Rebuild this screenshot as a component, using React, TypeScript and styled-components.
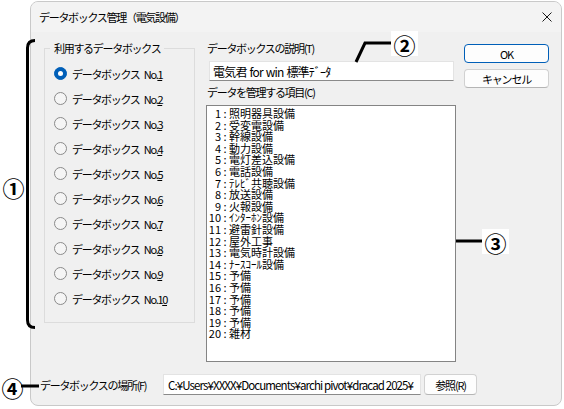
import styled, { createGlobalStyle } from 'styled-components';

const GlobalStyle = createGlobalStyle`
  html, body {
    margin: 0;
    padding: 0;
    background: #ffffff;
  }
  body {
    font-family: "Noto Sans CJK JP", "Noto Sans", sans-serif;
  }
`;

const boxes = Array.from({ length: 10 }, (_, i) => i + 1);

const items = [
  '照明器具設備', '受変電設備', '幹線設備', '動力設備', '電灯差込設備',
  '電話設備', 'ﾃﾚﾋﾞ共聴設備', '放送設備', '火報設備', 'ｲﾝﾀｰﾎﾝ設備',
  '避雷針設備', '屋外工事', '電気時計設備', 'ﾅｰｽｺｰﾙ設備', '予備',
  '予備', '予備', '予備', '予備', '雑材',
];

const Page = styled.div`
  position: relative;
  width: 564px;
  height: 409px;
  box-sizing: border-box;
  padding: 1px 2px 3px 30px;
  overflow: hidden;
`;

const Window = styled.div`
  width: 532px;
  height: 405px;
  box-sizing: border-box;
  border: 1px solid #c9c9c9;
  border-radius: 8px;
  background: #f0f0f0;
  overflow: hidden;
  display: flex;
  flex-direction: column;
  color: #000;
  font-size: 11px;
  letter-spacing: -1.3px;
  word-spacing: 3px;
`;

const TitleBar = styled.div`
  height: 30px;
  flex: none;
  display: flex;
  align-items: center;
  justify-content: space-between;
  padding: 0 9px 0 8px;
  background: #f3f3f3;
  font-size: 11px;
  letter-spacing: -1.3px;
`;

const CloseIcon = styled.svg`
  width: 10px;
  height: 10px;
  stroke: #1a1a1a;
  stroke-width: 1;
`;

const Body = styled.div`
  flex: 1;
  display: flex;
  flex-direction: column;
  padding: 9px 12px 0 9px;
`;

const MainRow = styled.div`
  display: flex;
  align-items: flex-start;
  padding-left: 4px;
`;

const GroupBox = styled.fieldset`
  width: 151px;
  height: 282px;
  box-sizing: border-box;
  margin: 0;
  padding: 6px 9px 0 9px;
  border: 1px solid #dcdcdc;
`;

const Legend = styled.legend`
  padding: 0 4px;
  margin-left: -4px;
  line-height: 14px;
`;

const RadioRow = styled.label`
  height: 25px;
  display: flex;
  align-items: center;
  gap: 5px;
  white-space: nowrap;
`;

const Radio = styled.span<{ $on?: boolean }>`
  width: 13px;
  height: 13px;
  flex: none;
  box-sizing: border-box;
  border-radius: 50%;
  border: 1px solid ${(p) => (p.$on ? '#005fb8' : '#8a8a8a')};
  background: ${(p) => (p.$on ? '#005fb8' : '#f5f5f5')};
  display: flex;
  align-items: center;
  justify-content: center;
  &::after {
    content: '';
    display: ${(p) => (p.$on ? 'block' : 'none')};
    width: 5px;
    height: 5px;
    border-radius: 50%;
    background: #fff;
  }
`;

const Key = styled.span`
  text-decoration: underline;
  text-underline-offset: 1px;
`;

const MidColumn = styled.div`
  width: 250px;
  margin-left: 11px;
  display: flex;
  flex-direction: column;
`;

const Label = styled.div<{ $gap?: number }>`
  line-height: 14px;
  padding-left: 1px;
  margin-top: ${(p) => p.$gap ?? 0}px;
  white-space: nowrap;
`;

const TextBox = styled.div`
  height: 20px;
  box-sizing: border-box;
  background: #fff;
  border: 1px solid #e3e3e3;
  border-bottom-color: #8a8a8a;
  display: flex;
  align-items: center;
  white-space: pre;
  overflow: hidden;
`;

const DescBox = styled(TextBox)`
  width: 245px;
  margin: 6px 0 0 3px;
  padding-left: 3px;
  font-size: 12px;
  letter-spacing: -0.8px;
  word-spacing: 1px;
`;

const ListBox = styled.div`
  width: 250px;
  height: 257px;
  margin-top: 6px;
  box-sizing: border-box;
  border: 1px solid #848484;
  background: #fff;
  overflow: hidden;
  padding: 2px 0 0 0;
  font-size: 11px;
  letter-spacing: 0;
  word-spacing: 0;
`;

const Item = styled.div`
  height: 11.6px;
  line-height: 11.6px;
  display: flex;
  white-space: nowrap;
`;

const Num = styled.span`
  width: 14px;
  text-align: right;
`;

const Colon = styled.span`
  width: 8px;
  text-align: center;
`;

const ButtonColumn = styled.div`
  margin-left: 8px;
  padding-top: 3px;
  display: flex;
  flex-direction: column;
  gap: 6px;
`;

const Button = styled.button<{ $default?: boolean; $w?: number }>`
  width: ${(p) => p.$w ?? 85}px;
  height: 19px;
  box-sizing: border-box;
  padding: 0;
  border-radius: 4px;
  border: 1px solid ${(p) => (p.$default ? '#005fb8' : '#d1d1d1')};
  border-bottom-color: ${(p) => (p.$default ? '#005fb8' : '#b5b5b5')};
  background: #fdfdfd;
  font-family: inherit;
  font-size: 11px;
  letter-spacing: -1.2px;
  color: #000;
  display: flex;
  align-items: center;
  justify-content: center;
`;

const BottomRow = styled.div`
  margin-top: 12px;
  display: flex;
  align-items: center;
`;

const PathLabel = styled.div`
  width: 123px;
  flex: none;
  white-space: nowrap;
`;

const PathBox = styled(TextBox)`
  width: 258px;
  height: 21px;
  padding-left: 4px;
  font-size: 11.5px;
  letter-spacing: -0.9px;
  word-spacing: 0;
`;

const RefButton = styled(Button)`
  height: 21px;
  margin-left: 3px;
`;

const Overlay = styled.svg`
  position: absolute;
  left: 0;
  top: 0;
  pointer-events: none;
`;

const Mark = styled.span<{ $x: number; $y: number; $bg?: boolean }>`
  position: absolute;
  left: ${(p) => p.$x}px;
  top: ${(p) => p.$y}px;
  width: 27px;
  height: 25px;
  display: flex;
  align-items: center;
  justify-content: center;
  background: ${(p) => (p.$bg ? '#fff' : 'transparent')};
  font-family: "Noto Sans CJK JP", sans-serif;
  font-weight: 700;
  font-size: 22px;
  line-height: 1;
  color: #000;
`;

export default function App() {
  return (
    <>
      <GlobalStyle />
      <Page>
        <Window>
          <TitleBar>
            <span>データボックス管理（電気設備）</span>
            <CloseIcon viewBox="0 0 10 10">
              <line x1="0.5" y1="0.5" x2="9.5" y2="9.5" />
              <line x1="9.5" y1="0.5" x2="0.5" y2="9.5" />
            </CloseIcon>
          </TitleBar>
          <Body>
            <MainRow>
              <GroupBox>
                <Legend>利用するデータボックス</Legend>
                {boxes.map((n) => {
                  const s = String(n);
                  return (
                    <RadioRow key={n}>
                      <Radio $on={n === 1} />
                      <span>
                        データボックス No.{s.slice(0, -1)}
                        <Key>{s.slice(-1)}</Key>
                      </span>
                    </RadioRow>
                  );
                })}
              </GroupBox>
              <MidColumn>
                <Label>データボックスの説明(T)</Label>
                <DescBox>電気君 for win 標準ﾃﾞｰﾀ</DescBox>
                <Label $gap={4}>データを管理する項目(C)</Label>
                <ListBox>
                  {items.map((name, i) => (
                    <Item key={i}>
                      <Num>{i + 1}</Num>
                      <Colon>:</Colon>
                      <span>{name}</span>
                    </Item>
                  ))}
                </ListBox>
              </MidColumn>
              <ButtonColumn>
                <Button $default>OK</Button>
                <Button>キャンセル</Button>
              </ButtonColumn>
            </MainRow>
            <BottomRow>
              <PathLabel>データボックスの場所(F)</PathLabel>
              <PathBox>C:¥Users¥XXXX¥Documents¥archi pivot¥dracad 2025¥</PathBox>
              <RefButton $w={53}>参照(R)</RefButton>
            </BottomRow>
          </Body>
        </Window>

        <Overlay width="564" height="409" viewBox="0 0 564 409">
          <g fill="none" stroke="#000" strokeWidth="3" strokeLinecap="butt">
            <path d="M35 40.5 Q27.5 40.5 27.5 48 L27.5 320 Q27.5 327.5 35 327.5" />
            <polyline points="356,62 365,43 392,43" />
            <line x1="456" y1="241" x2="483" y2="241" />
            <line x1="21" y1="386" x2="39" y2="386" />
          </g>
        </Overlay>
        <Mark $x={0} $y={174}>①</Mark>
        <Mark $x={391} $y={31} $bg>②</Mark>
        <Mark $x={482} $y={229} $bg>③</Mark>
        <Mark $x={-1} $y={374}>④</Mark>
      </Page>
    </>
  );
}
